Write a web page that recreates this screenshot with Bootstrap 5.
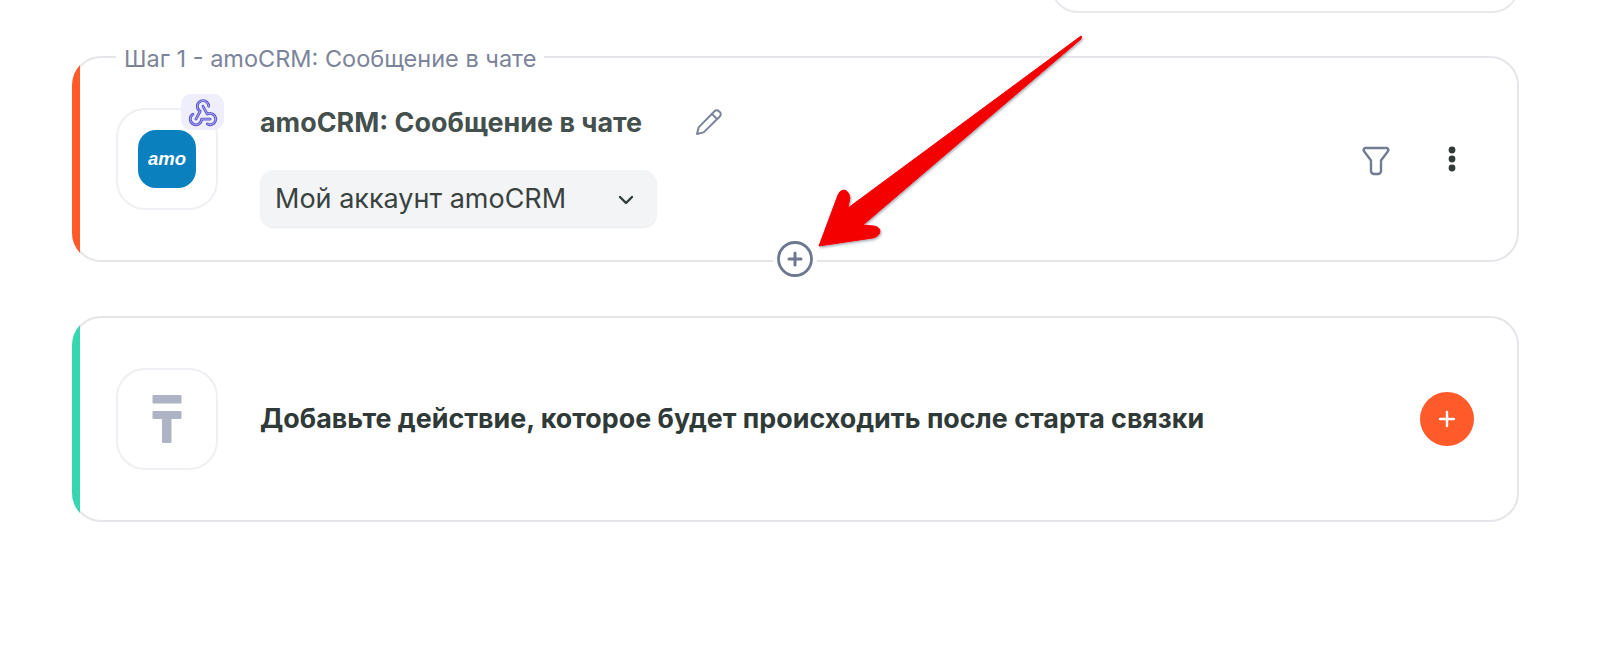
<!DOCTYPE html>
<html lang="en">
<head>
  <meta charset="UTF-8">
  <meta name="viewport" content="width=device-width, initial-scale=1.0">
  <title>Шаги связки</title>
  <link href="https://cdn.jsdelivr.net/npm/bootstrap@5.3.0/dist/css/bootstrap.min.css" rel="stylesheet">
  <style>
    html, body { height: 646px; overflow: hidden; }
    body { background: #fff; font-family: Inter, "Noto Sans", sans-serif; }
    .flow-page { padding: 0 81px 0 72px; }
    .stub-card {
      width: 468px; height: 53px; margin-top: -40px; margin-bottom: 43px;
      border: 2px solid #e7e9ec; border-radius: 28px; background: #fff;
    }
    .step-card {
      height: 206px; margin-bottom: 54px; padding-left: 42px;
      border: 2px solid #e4e6ea; border-radius: 29px; background: #fff;
    }
    .step-card::before {
      content: ""; position: absolute; inset: -2px; border-radius: inherit; pointer-events: none;
      background: linear-gradient(90deg, var(--stripe) 8px, transparent 8px);
    }
    .stripe-orange { --stripe: #ff5a27; }
    .stripe-teal { --stripe: #35d6b0; }
    .step-label {
      position: absolute; top: -14px; left: 42px; padding: 0 8px; background: #fff;
      font-size: 23.5px; line-height: 30px; color: #7b849a;
    }
    .app-box {
      width: 102px; height: 102px; flex: none; border: 2px solid #eef0f3; border-radius: 29px;
    }
    .amo-logo {
      width: 58px; height: 58px; border-radius: 18px; background: #0a80bf; color: #fff;
      font: italic 700 18.5px/58px "Liberation Sans", sans-serif; text-align: center;
    }
    .hook-badge {
      position: absolute; top: -16px; right: -8px; width: 43px; height: 36px;
      border-radius: 10px; background: #eeeefc;
    }
    .hook-badge svg { flex: none; }
    .step-body { margin-left: 42px; margin-top: 45px; }
    .step-title { font-size: 26.9px; line-height: 38px; font-weight: 700; color: #44504e; }
    .add-title { margin-left: 42px; margin-top: -2px; font-size: 26.85px; line-height: 38px; font-weight: 700; color: #2f3a38; }
    .edit-icon { margin-left: 53px; }
    .acct-btn {
      width: 397px; height: 57px; margin-top: 29px; padding: 2px 15px 0;
      border: 0; border-radius: 14px; background: #f3f4f6; box-shadow: 0 1px 1px #e9ebee;
      font-size: 27px; color: #39423f;
    }
    .acct-btn:hover { background: #f3f4f6; color: #39423f; }
    .step-tools { padding-right: 61px; gap: 58px; }
    .add-insert {
      position: absolute; left: 50%; bottom: -17px; width: 44px; height: 36px;
      margin-left: -23px; background: #fff;
    }
    .add-round {
      width: 54px; height: 54px; margin-right: 43px; padding: 0; border: 0;
      border-radius: 50%; background: #ff5a2a;
    }
    .add-round:hover { background: #ff5a2a; }
    .arrow-mark { position: absolute; top: 0; left: 0; pointer-events: none; }
  </style>
</head>
<body class="position-relative">
  <div class="flow-page">
    <div class="stub-card ms-auto"></div>

    <div class="step-card stripe-orange position-relative d-flex align-items-center">
      <div class="step-label">Шаг 1 - amoCRM: Сообщение в чате</div>
      <div class="app-box position-relative d-flex align-items-center justify-content-center">
        <div class="amo-logo">amo</div>
        <div class="hook-badge d-flex align-items-center justify-content-center">
          <svg width="34" height="34" viewBox="0 0 24 24" fill="none" stroke-linecap="round" stroke-linejoin="round">
            <g id="hookLines">
              <path d="M4.876 13.61a4 4 0 1 0 6.124 3.39h6"/>
              <path d="M15.066 20.502a4 4 0 1 0 1.934 -7.502c-.706 0 -1.424 .179 -2 .5l-3 -5.5"/>
              <path d="M16 8a4 4 0 1 0 -8 0c0 1.506 .77 2.818 2 3.5l-3 5.5"/>
            </g>
          </svg>
        </div>
      </div>
      <div class="step-body align-self-start">
        <div class="d-flex align-items-center">
          <div class="step-title">amoCRM: Сообщение в чате</div>
          <svg class="edit-icon" width="28" height="28" viewBox="0 0 28 28" fill="none" stroke="#7b849a" stroke-width="2" stroke-linejoin="round" stroke-linecap="round">
            <path d="M2 26l1.6-6.6L19.5 3.2a3 3 0 0 1 4.4 0l.9.9a3 3 0 0 1 0 4.4L8.6 24.4z"/>
            <path d="M17 6l5 5"/>
          </svg>
        </div>
        <button type="button" class="btn acct-btn d-flex align-items-center justify-content-between">
          <span>Мой аккаунт amoCRM</span>
          <svg class="me-2" width="16" height="10" viewBox="0 0 16 10" fill="none" stroke="#2f3a38" stroke-width="2.4" stroke-linecap="round" stroke-linejoin="round">
            <path d="M2 2l6 6 6-6"/>
          </svg>
        </button>
      </div>
      <div class="step-tools ms-auto d-flex align-items-center">
        <svg class="mt-1" width="28" height="30" viewBox="0 0 28 30" fill="none" stroke="#717b92" stroke-width="2.4" stroke-linejoin="round">
          <path d="M3.5 2h21a2 2 0 0 1 1.4 3.3L19 14.5V25a3 3 0 0 1-3 3h-4a3 3 0 0 1-3-3V14.5L2.1 5.3A2 2 0 0 1 3.5 2z"/>
        </svg>
        <svg width="8" height="26" viewBox="0 0 8 26" fill="#333b3a">
          <circle cx="4" cy="4" r="3.4"/><circle cx="4" cy="13" r="3.4"/><circle cx="4" cy="22" r="3.4"/>
        </svg>
      </div>
      <div class="add-insert d-flex align-items-center justify-content-center">
        <svg width="36" height="36" viewBox="0 0 36 36" fill="none" stroke="#6d7890" stroke-linecap="round">
          <circle cx="18" cy="18" r="16.5" stroke-width="2.8"/>
          <path d="M18 12v12M12 18h12" stroke-width="3"/>
        </svg>
      </div>
    </div>

    <div class="step-card stripe-teal position-relative d-flex align-items-center">
      <div class="app-box d-flex align-items-center justify-content-center">
        <svg width="30" height="48" viewBox="0 0 30 48" fill="#aeb4c6">
          <rect x="0.5" width="29" height="8.5" rx="1"/>
          <rect x="0.5" y="16" width="29" height="8" rx="1"/>
          <rect x="10" y="16" width="9.5" height="32" rx="1"/>
        </svg>
      </div>
      <div class="add-title">Добавьте действие, которое будет происходить после старта связки</div>
      <button type="button" class="btn add-round ms-auto d-flex align-items-center justify-content-center">
        <svg width="18" height="18" viewBox="0 0 18 18" fill="none" stroke="#fff" stroke-width="2.4" stroke-linecap="round">
          <path d="M9 2v14M2 9h14"/>
        </svg>
      </button>
    </div>
  </div>

  <svg class="arrow-mark" width="1600" height="646" viewBox="0 0 1600 646">
    <defs>
      <filter id="arrowShadow" x="-5%" y="-5%" width="110%" height="110%">
        <feDropShadow dx="1" dy="1.5" stdDeviation="1" flood-color="#3a4a5a" flood-opacity=".45"/>
      </filter>
    </defs>
    <path filter="url(#arrowShadow)" fill="#f50000" stroke="#f50000" stroke-width="1" stroke-linejoin="round"
      d="M1081 36 L848 208 L850 198 Q849 191 844 190 Q840 190 838 195 L819 246 L873 238 Q880 236 880 231 Q879 226 873 226 L863 225 L1081 39 Q1082 36 1081 36 Z"/>
  </svg>

  <script>
    // webhook icon is a dark band with a pale core, same lines drawn twice
    var hook = document.getElementById("hookLines");
    var core = hook.cloneNode(true);
    core.removeAttribute("id");
    hook.setAttribute("stroke", "#5b56d2");
    hook.setAttribute("stroke-width", "2");
    core.setAttribute("stroke", "#bdbbf3");
    core.setAttribute("stroke-width", ".6");
    hook.parentNode.appendChild(core);
  </script>
  <script src="https://cdn.jsdelivr.net/npm/bootstrap@5.3.0/dist/js/bootstrap.bundle.min.js"></script>
</body>
</html>
